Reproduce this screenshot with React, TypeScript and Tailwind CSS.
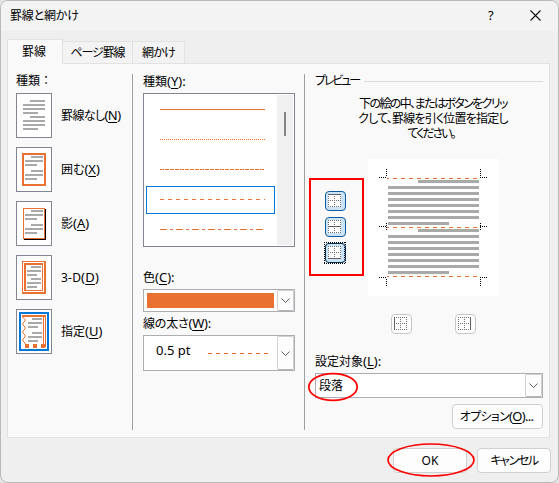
import type { ReactNode } from "react"

type Bar = [x: number, y: number, width: number]

const NONE_BARS: Bar[] = [
  [14, 7, 15], [7, 11, 22], [7, 15, 22], [7, 19, 15],
  [14, 23, 15], [7, 27, 22], [7, 31, 22], [7, 35, 15],
]

const BOX_BARS: Bar[] = [
  [15, 9, 12], [9, 13, 18], [9, 17, 12],
  [15, 23, 12], [9, 27, 18], [9, 31, 12],
]

const THREE_D_BARS: Bar[] = [
  [15, 11, 10], [11, 15, 14], [11, 19, 10],
  [15, 23, 10], [11, 27, 14], [11, 31, 10],
]

const CUSTOM_BARS: Bar[] = [
  [16, 9, 10], [12, 13, 14], [12, 17, 10],
  [16, 23, 10], [12, 27, 14], [12, 31, 10],
]

const Bars = ({ bars }: { bars: Bar[] }) => (
  <g fill="#a9a9a9">
    {bars.map(([x, y, width]) => (
      <rect key={y} x={x} y={y} width={width} height={2} />
    ))}
  </g>
)

const settings = [
  {
    label: "罫線なし",
    accessKey: "N",
    tracking: "tracking-[-0.6px]",
    art: <Bars bars={NONE_BARS} />,
  },
  {
    label: "囲む",
    accessKey: "X",
    tracking: "tracking-normal",
    art: (
      <>
        <rect x="7" y="7" width="22" height="31" fill="none" stroke="#e97132" strokeWidth="2" />
        <Bars bars={BOX_BARS} />
      </>
    ),
  },
  {
    label: "影",
    accessKey: "A",
    tracking: "tracking-normal",
    art: (
      <>
        <path d="M29 8h1v31H8v-1h21z" fill="#000" />
        <rect x="7.5" y="7.5" width="21" height="30" fill="#fff" stroke="#e97132" />
        <Bars bars={BOX_BARS} />
      </>
    ),
  },
  {
    label: "3-D",
    accessKey: "D",
    tracking: "tracking-[0.2px]",
    art: (
      <>
        <rect x="6" y="6" width="24" height="33" fill="#e97132" />
        <rect x="7.5" y="7.5" width="20" height="29" stroke="#fff" fill="none" />
        <rect x="10" y="10" width="16" height="25" fill="#fff" />
        <Bars bars={THREE_D_BARS} />
      </>
    ),
  },
  {
    label: "指定",
    accessKey: "U",
    tracking: "tracking-normal",
    art: (
      <>
        <rect x="4" y="4" width="28" height="37" fill="none" stroke="#0078d7" strokeWidth="2" />
        <path
          d="M6 6h24v2H6zM27 8h1v27h-1zM29 8h1v30h-1zM9 35h4v4H9zM17 35h4v4h-4zM25 35h4v4h-4z"
          fill="#e97132"
        />
        <path d="M6.5 8l3 3-3 4 3 4-3 4 3 4-3 4 3 4" fill="none" stroke="#e97132" />
        <Bars bars={CUSTOM_BARS} />
      </>
    ),
  },
]

const lineStyles = [
  { name: "solid", dash: "none" },
  { name: "dotted", dash: "1 1" },
  { name: "short-dash", dash: "4 1" },
  { name: "dash", dash: "4 4", selected: true },
  { name: "dash-dot", dash: "7 3 3 3" },
]

const Label = ({ text, accessKey, suffix = "" }: { text: string; accessKey: string; suffix?: string }) => (
  <>
    {text}
    <span className="text-[13px]">
      (<span className="underline underline-offset-2">{accessKey}</span>){suffix}
    </span>
  </>
)

const Arrow = ({ className }: { className: string }) => (
  <span className={`flex items-center justify-center rounded-[2px] border border-[#d0d0d0] border-b-[#b5b5b5] bg-[#fdfdfd] ${className}`}>
    <svg width="9" height="5" viewBox="0 0 9 5" fill="none" stroke="#5c5c5c">
      <path d="M.5.5l4 4 4-4" />
    </svg>
  </span>
)

type Edge = "top" | "middle" | "bottom" | "left" | "right"

const EDGE_PATHS: Record<Edge, string> = {
  top: "M0 .5h13",
  middle: "M0 6.5h13",
  bottom: "M0 12.5h13",
  left: "M.5 0v13",
  right: "M12.5 0v13",
}

const BorderButton = ({ edge, active, focused }: { edge: Edge; active?: boolean; focused?: boolean }) => (
  <button
    className={`relative flex h-5 w-[21px] shrink-0 rounded-[4px] border pl-0.5 pt-0.5 ${
      active ? "border-[#0f5a9c] bg-[#cce4f7]" : "border-[#c8c8c8] bg-[#fdfdfd]"
    }`}
  >
    <svg width="13" height="13" viewBox="0 0 13 13" fill="none">
      <path d="M0 0h13v13H0z" fill="#fff" />
      <path
        d="M0 .5h13M0 6.5h13M0 12.5h13M.5 0v13M6.5 0v13M12.5 0v13"
        stroke="#707070"
        strokeDasharray="1 1"
      />
      <path d={EDGE_PATHS[edge]} stroke="#606060" />
    </svg>
    {focused && (
      <svg width="22" height="22" viewBox="0 0 22 22" className="absolute left-[-2px] top-[-2px]" fill="none">
        <path d="M0 .5h22M0 21.5h22M.5 0v22M21.5 0v22" stroke="#000" strokeDasharray="1 1" />
        <rect x="1.5" y="1.5" width="19" height="19" rx="3" stroke="#000" strokeDasharray="1 1" />
      </svg>
    )}
  </button>
)

const Preview = () => (
  <svg width="131" height="137" viewBox="368 159 131 137" className="bg-white" fill="none">
    {[180, 229].map((top) => (
      <g key={top} fill="#a9a9a9">
        <rect x="418" y={top} width="61" height="3" />
        {[6, 12, 18, 24, 30, 36].map((dy) => (
          <rect key={dy} x="388" y={top + dy} width="91" height="3" />
        ))}
        <rect x="388" y={top + 42} width="61" height="3" />
      </g>
    ))}
    <path
      d="M387 178.5h91M387 227.5h91M387 276.5h91"
      stroke="#e97132"
      strokeDasharray="4 4"
      strokeDashoffset="2"
    />
    <path
      d="M379 177.5h8M386.5 169v8M480 177.5h8M480.5 169v8M379 226.5h8M386.5 223v8M480 226.5h8M480.5 223v8M379 277.5h8M386.5 279v8M480 277.5h8M480.5 279v8"
      stroke="#000"
      strokeDasharray="1 1"
    />
  </svg>
)

const PushButton = ({ className, children }: { className: string; children: ReactNode }) => (
  <button className={`flex h-[25px] items-center justify-center whitespace-nowrap rounded-[4px] border border-[#d0d0d0] bg-[#fdfdfd] ${className}`}>
    {children}
  </button>
)

const Settings = () => (
  <div className="flex w-[125px] flex-col border-r border-[#a0a0a0] pl-2">
    <p className="h-[19px] leading-[14px]">種類 ：</p>
    <div className="flex flex-col gap-[9px]">
      {settings.map(({ label, accessKey, tracking, art }) => (
        <div key={accessKey} className={`flex items-center gap-[9px] whitespace-nowrap ${tracking}`}>
          <svg width="36" height="45" viewBox="0 0 36 45" className="shrink-0">
            <rect x=".5" y=".5" width="35" height="44" fill="#fff" stroke="#838690" />
            {art}
          </svg>
          <span><Label text={label} accessKey={accessKey} /></span>
        </div>
      ))}
    </div>
  </div>
)

const LineOptions = () => (
  <div className="flex w-[172px] flex-col border-r border-[#a0a0a0] pl-2.5">
    <p className="h-[19px] leading-[14px]"><Label text="種類" accessKey="Y" suffix=":" /></p>
    <div className="flex h-[154px] w-[152px] justify-between border border-[#838690] bg-white p-px">
      <div className="flex flex-col gap-0.5 pl-px pt-px">
        {lineStyles.map(({ name, dash, selected }) => (
          <div
            key={name}
            className={`flex h-7 w-[129px] items-center border pl-[13px] ${selected ? "border-[#0078d7]" : "border-transparent"}`}
          >
            <svg width="105" height="1" viewBox="0 0 105 1" className="mt-[-1px]">
              <path d="M0 .5h105" stroke="#e97132" strokeDasharray={dash} />
            </svg>
          </div>
        ))}
      </div>
      <div className="flex w-4 justify-center bg-[#f0f0f0] pt-[17px]">
        <div className="h-6 w-0.5 bg-[#858585]" />
      </div>
    </div>
    <p className="mt-[23px] h-[19px] leading-[14px]"><Label text="色" accessKey="C" suffix=":" /></p>
    <div className="flex h-[23px] w-[152px] items-center justify-between border border-[#adadb3] bg-white pl-[3px]">
      <span className="h-[15px] w-[127px] bg-[#e97132]" />
      <Arrow className="h-[21px] w-[17px]" />
    </div>
    <p className="mt-1 h-[19px] leading-[14px] tracking-[-0.2px]"><Label text="線の太さ" accessKey="W" suffix=":" /></p>
    <div className="flex h-9 w-[152px] items-center border border-[#adadb3] bg-white pl-3">
      <span className="w-[52px] pb-1 text-[13px]">0.5 pt</span>
      <svg width="60" height="1" viewBox="0 0 60 1">
        <path d="M0 .5h60" stroke="#e97132" strokeDasharray="4 4" />
      </svg>
      <Arrow className="ml-auto h-[34px] w-[17px]" />
    </div>
  </div>
)

const PreviewPane = () => (
  <div className="flex w-[238px] flex-col pl-2.5">
    <div className="flex h-[14px] items-center gap-1.5 leading-[14px]">
      <span className="w-[43px] whitespace-nowrap tracking-[-2.1px]">プレビュー</span>
      <span className="h-px grow bg-[#dcdcdc]" />
    </div>
    <div className="ml-[35px] mt-2 flex h-[63px] w-[166px] flex-col items-center whitespace-nowrap leading-[15px]">
      <p className="tracking-[-1.6px]">下の絵の中、またはボタンをクリッ</p>
      <p className="tracking-[-0.8px]">クして、罫線を引く位置を指定し</p>
      <p className="mr-1 tracking-[-2px]">てください。</p>
    </div>
    <div className="flex">
      <div className="ml-[-6px] mt-[19px] flex h-[98px] w-[55px] flex-col items-center gap-1.5 border-2 border-[#f00] pr-[2px] pt-[11px]">
        <BorderButton edge="top" active />
        <BorderButton edge="middle" active />
        <BorderButton edge="bottom" active focused />
      </div>
      <div className="ml-1">
        <Preview />
      </div>
    </div>
    <div className="ml-[76px] mt-[18px] flex gap-[43px]">
      <BorderButton edge="left" />
      <BorderButton edge="right" />
    </div>
    <p className="mt-5 h-[19px] leading-[14px]"><Label text="設定対象" accessKey="L" suffix=":" /></p>
    <div className="relative flex h-[25px] items-center justify-between border border-[#adadb3] bg-white pl-[3px]">
      段落
      <Arrow className="h-[23px] w-[17px]" />
      <svg width="52" height="30" viewBox="0 0 52 30" className="absolute left-[-9px] top-[-2px]">
        <ellipse cx="26" cy="15" rx="24.2" ry="13.3" fill="none" stroke="#f00" strokeWidth="1.7" />
      </svg>
    </div>
    <PushButton className="mt-1.5 w-[91px] self-end pr-0.5 tracking-[-0.7px]">
      <span><Label text="オプション" accessKey="O" suffix="..." /></span>
    </PushButton>
  </div>
)

export default function App() {
  return (
    <div className="h-[483px] w-[559px] bg-[#e4e4e4] [font-family:'Noto_Sans','Noto_Sans_CJK_JP',sans-serif] text-[12px] text-black [font-feature-settings:'palt']">
      <div className="flex h-full flex-col overflow-hidden rounded-[8px] border border-[#b9b9b9] bg-[#efefef]">
        <header className="flex h-[30px] shrink-0 items-center bg-[#f3f3f3] pl-[9px]">
          <h1 className="grow pb-px tracking-[-0.2px]">罫線と網かけ</h1>
          <span className="w-[42px] text-[13px]">?</span>
          <svg width="11" height="11" viewBox="0 0 11 11" className="mb-px mr-[17px]" fill="none" stroke="#111" strokeWidth="1.1">
            <path d="M.5.5l10 10M10.5.5l-10 10" />
          </svg>
        </header>
        <div className="ml-1.5 mt-2 flex h-6 shrink-0 items-end">
          <div className="z-10 mb-[-1px] flex h-[25px] w-14 items-center justify-center border border-b-0 border-[#e2e2e2] bg-[#f9f9f9] pr-0.5">罫線</div>
          <div className="flex h-[22px] w-[70px] items-center justify-center border-r border-t border-[#e2e2e2] bg-[#f3f3f3] tracking-[-1.1px]">ページ罫線</div>
          <div className="flex h-[22px] w-[52px] items-center justify-center border-r border-t border-[#e2e2e2] bg-[#f3f3f3] tracking-[-0.8px]">網かけ</div>
        </div>
        <main className="ml-1.5 flex h-[375px] w-[543px] shrink-0 border border-[#e2e2e2] bg-[#f9f9f9] pb-[7px] pt-2.5">
          <Settings />
          <LineOptions />
          <PreviewPane />
        </main>
        <footer className="flex justify-end gap-2.5 pr-[7px] pt-2.5">
          <PushButton className="relative w-[74px]">
            OK
            <svg width="90" height="36" viewBox="0 0 90 36" className="absolute left-[-8px] top-[-7px]">
              <ellipse cx="45" cy="18" rx="43" ry="16" fill="none" stroke="#f00" strokeWidth="1.7" />
            </svg>
          </PushButton>
          <PushButton className="w-[74px] tracking-[-1.4px]">キャンセル</PushButton>
        </footer>
      </div>
    </div>
  )
}
